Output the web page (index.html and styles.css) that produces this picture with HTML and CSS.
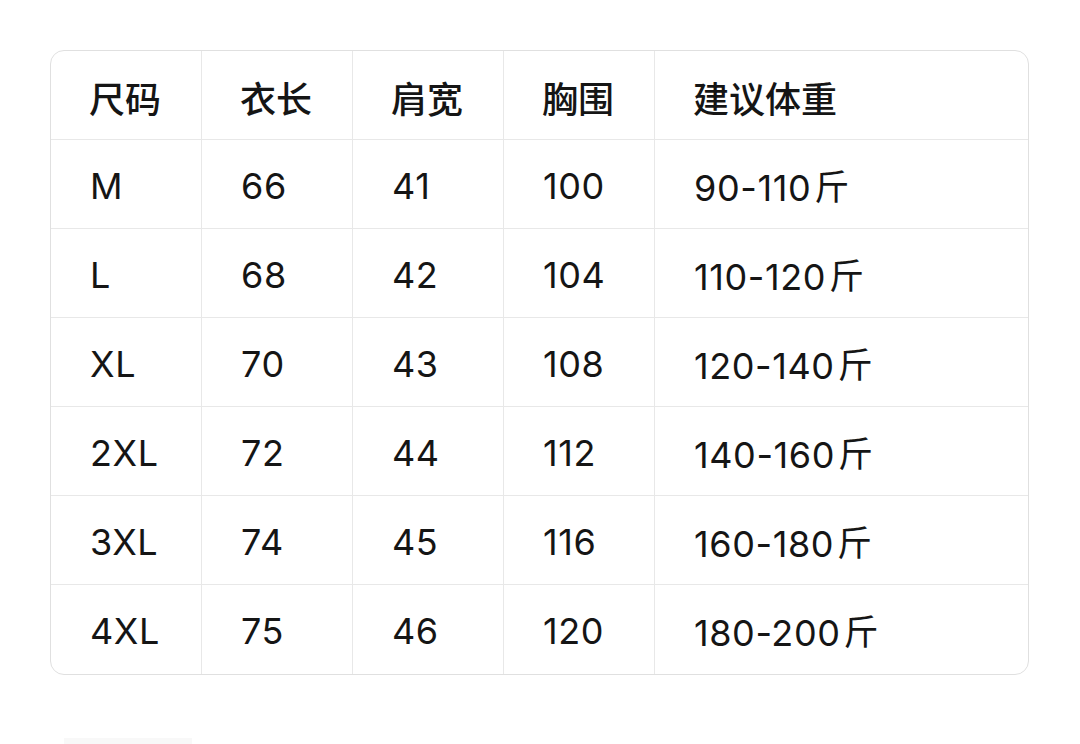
FILE: index.html
```html
<!DOCTYPE html>
<html lang="zh">
<head>
<meta charset="utf-8">
<link rel="stylesheet" href="styles.css">
</head>
<body>
<div class="table">
  <div class="cell head">尺码</div><div class="cell head">衣长</div><div class="cell head">肩宽</div><div class="cell head">胸围</div><div class="cell head last">建议体重</div>
  <div class="cell">M</div><div class="cell">66</div><div class="cell">41</div><div class="cell">100</div><div class="cell last">90-110<span class="unit">斤</span></div>
  <div class="cell">L</div><div class="cell">68</div><div class="cell">42</div><div class="cell">104</div><div class="cell last">110-120<span class="unit">斤</span></div>
  <div class="cell">XL</div><div class="cell">70</div><div class="cell">43</div><div class="cell">108</div><div class="cell last">120-140<span class="unit">斤</span></div>
  <div class="cell">2XL</div><div class="cell">72</div><div class="cell">44</div><div class="cell">112</div><div class="cell last">140-160<span class="unit">斤</span></div>
  <div class="cell">3XL</div><div class="cell">74</div><div class="cell">45</div><div class="cell">116</div><div class="cell last">160-180<span class="unit">斤</span></div>
  <div class="cell bottom">4XL</div><div class="cell bottom">75</div><div class="cell bottom">46</div><div class="cell bottom">120</div><div class="cell bottom last">180-200<span class="unit">斤</span></div>
</div>
<div class="faint"></div>
</body>
</html>
```
FILE: styles.css
```css
html, body {
  margin: 0;
  background: #ffffff;
}
body {
  padding: 50px 0 0 50px;
  font-family: Inter, "Noto Sans CJK SC", sans-serif;
  color: #151515;
}
.table {
  width: 979px;
  box-sizing: border-box;
  border: 1.5px solid #e0e0e0;
  border-radius: 14px;
  overflow: hidden;
  display: grid;
  grid-template-columns: 151px 151px 151px 151px 1fr;
  grid-auto-rows: 89px;
}
.cell {
  display: block;
  line-height: 84px;
  padding: 4px 0 0 39px;
  box-sizing: border-box;
  font-size: 36px;
  letter-spacing: 0.6px;
  white-space: nowrap;
  border-right: 1px solid #e8e8e8;
  border-bottom: 1px solid #e8e8e8;
}
.cell.last { border-right: none; }
.cell.bottom { border-bottom: none; }
.unit {
  font-family: "Noto Sans CJK SC", sans-serif;
  font-size: 35px;
  margin-left: 3px;
  letter-spacing: 0;
  position: relative;
  top: -1px;
}
.head {
  font-weight: 500;
  font-family: "Noto Sans CJK SC", sans-serif;
  font-size: 36px;
  letter-spacing: 0;
  padding-left: 38px;
}
.faint {
  margin: 63px 0 0 14px;
  width: 128px;
  height: 8px;
  background: #f8f8f8;
}
```
